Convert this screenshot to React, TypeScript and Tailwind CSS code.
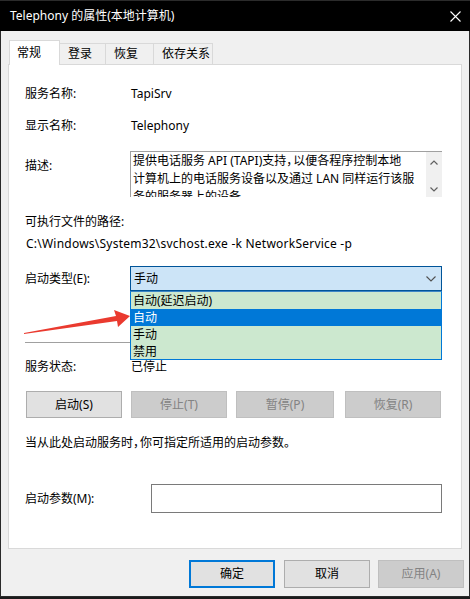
import React from "react";

const tabBase = "h-[21px] mt-[3px] pl-[8px] flex items-center whitespace-nowrap border border-b-0 border-[#d9d9d9] bg-[#f0f0f0] -ml-px";

function Btn({ children, disabled, primary, className = "" }: { children: React.ReactNode; disabled?: boolean; primary?: boolean; className?: string }) {
  const base = "flex items-center justify-center text-[12px] leading-none";
  const style = disabled
    ? "bg-[#cccccc] border border-[#bfbfbf] text-[#838383]"
    : primary
    ? "bg-[#e1e1e1] border-2 border-[#0078d7] text-black"
    : "bg-[#e1e1e1] border border-[#adadad] text-black";
  return <div className={`${base} ${style} ${className}`}>{children}</div>;
}

function Comma({ ch = "，" }: { ch?: string }) {
  return <span className="tracking-[-5px]">{ch}</span>;
}

export default function App() {
  return (
    <div className="relative w-[470px] h-[599px] overflow-hidden bg-[#1b1b1b] font-['Noto_Sans','Noto_Sans_CJK_SC',sans-serif] text-[12px] text-black">
      {/* title bar */}
      <div className="h-[31px] bg-black border-t border-[#2b2b2b] flex items-center justify-between pl-[10px] pr-[9px]">
        <span className="text-white text-[12px] leading-none">Telephony 的属性(本地计算机)</span>
        <svg width="11" height="11" viewBox="0 0 11 11">
          <path d="M0.5 0.5 L10.5 10.5 M10.5 0.5 L0.5 10.5" stroke="#ffffff" strokeWidth="1.1" />
        </svg>
      </div>
      {/* body */}
      <div className="h-[566px] bg-[#f0f0f0] border-l border-r border-b border-[#2a2a2a] flex flex-col">
        {/* tabs */}
        <div className="flex h-[25px] mt-[9px] pl-[8px] relative z-10">
          <div className="h-[25px] w-[51px] pl-[7px] flex items-center bg-white border border-b-0 border-[#d9d9d9]">常规</div>
          <div className={`${tabBase} w-[47px]`}>登录</div>
          <div className={`${tabBase} w-[49px]`}>恢复</div>
          <div className={`${tabBase} w-[60px]`}>依存关系</div>
        </div>
        {/* panel */}
        <div className="ml-[7px] w-[454px] h-[485px] -mt-px bg-white border border-[#d9d9d9] flex flex-col pl-[16px]">
          <div className="flex items-center h-[18px] mt-[20px]">
            <span className="w-[106px]">服务名称:</span>
            <span>TapiSrv</span>
          </div>
          <div className="flex items-center h-[18px] mt-[14px]">
            <span className="w-[106px]">显示名称:</span>
            <span>Telephony</span>
          </div>
          <div className="flex h-[46px] mt-[16px]">
            <span className="w-[105px] pt-[6px] leading-[18px]">描述:</span>
            <div className="w-[312px] h-[46px] border-t border-l border-[#a0a0a0] flex overflow-hidden">
              <div className="flex-1 pl-[2px] leading-[18px] overflow-hidden whitespace-nowrap">
                提供电话服务 API (TAPI)支持<Comma />以便各程序控制本地<br />
                计算机上的电话服务设备以及通过 LAN 同样运行该服<br />
                务的服务器上的设备<Comma ch="。" />
              </div>
              <div className="w-[16px] bg-[#f0f0f0] flex flex-col items-center justify-between pt-[8px] pb-[5px]">
                <svg width="8" height="5" viewBox="0 0 8 5"><path d="M0.5 4.5 L4 1 L7.5 4.5" fill="none" stroke="#606060" strokeWidth="1.2" /></svg>
                <svg width="8" height="5" viewBox="0 0 8 5"><path d="M0.5 0.5 L4 4 L7.5 0.5" fill="none" stroke="#606060" strokeWidth="1.2" /></svg>
              </div>
            </div>
          </div>
          <div className="h-[18px] mt-[16px] flex items-center">可执行文件的路径:</div>
          <div className="h-[18px] mt-[4px] flex items-center pl-[1px] tracking-[0.23px]">C:\Windows\System32\svchost.exe -k NetworkService -p</div>
          <div className="flex items-center h-[25px] mt-[13px]">
            <span className="w-[105px]">启动类型(E):</span>
            <div className="relative w-[312px] h-[25px] bg-[#cce4f7] border border-[#005499] flex items-center justify-between pl-[3px] pr-[5px]">
              <span>手动</span>
              <svg width="10" height="6" viewBox="0 0 10 6"><path d="M0.5 0.5 L5 5 L9.5 0.5" fill="none" stroke="#505050" strokeWidth="1.1" /></svg>
              {/* dropdown list */}
              <div className="absolute left-[-1px] top-[24px] w-[312px] h-[69px] bg-[#cce8cf] border border-[#0078d7] border-t-[#3d86c6] flex flex-col z-20">
                <div className="h-[17px] flex items-center pl-[2px]">自动(延迟启动)</div>
                <div className="h-[17px] flex items-center pl-[2px] bg-[#0078d7] text-white">自动</div>
                <div className="h-[17px] flex items-center pl-[2px]">手动</div>
                <div className="h-[17px] flex items-center pl-[2px]">禁用</div>
              </div>
            </div>
          </div>
          <div className="h-px w-[417px] bg-[#a0a0a0] mt-[51px]" />
          <div className="flex items-center h-[18px] mt-[15px]">
            <span className="w-[106px]">服务状态:</span>
            <span>已停止</span>
          </div>
          <div className="flex h-[27px] mt-[15px] pl-[1px]">
            <Btn className="w-[96px]">启动(S)</Btn>
            <Btn disabled className="w-[96px] ml-[9px]">停止(T)</Btn>
            <Btn disabled className="w-[98px] ml-[9px]">暂停(P)</Btn>
            <Btn disabled className="w-[96px] ml-[11px]">恢复(R)</Btn>
          </div>
          <div className="h-[18px] mt-[16px] flex items-center whitespace-nowrap">
            <span>当从此处启动服务时<Comma />你可指定所适用的启动参数<Comma ch="。" /></span>
          </div>
          <div className="flex items-center h-[29px] mt-[32px]">
            <span className="w-[126px]">启动参数(M):</span>
            <div className="w-[291px] h-[29px] border border-[#7a7a7a] bg-white" />
          </div>
        </div>
        {/* bottom buttons */}
        <div className="flex h-[28px] mt-[11px] pl-[188px]">
          <Btn primary className="w-[86px]">确定</Btn>
          <Btn className="w-[86px] ml-[9px]">取消</Btn>
          <Btn disabled className="w-[86px] ml-[8px]">应用(A)</Btn>
        </div>
      </div>
      {/* red arrow annotation */}
      <svg className="absolute left-0 top-0 pointer-events-none z-30" width="470" height="599" viewBox="0 0 470 599">
        <polygon points="24,333 116,316 114,310 130,316 118,327 117,321 24,334" fill="#ea3a2f" />
      </svg>
    </div>
  );
}
